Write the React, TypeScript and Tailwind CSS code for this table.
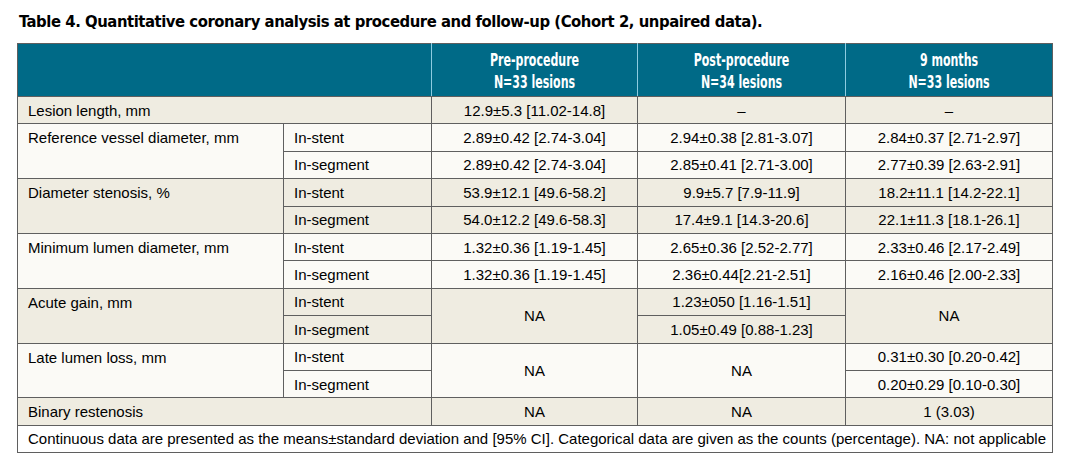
import React from 'react';

type Sub = { label: string; values: (string | null)[] };
type Group = { name: string; shaded: boolean; subs?: Sub[]; values?: string[]; merged?: (string | null)[] };

const condensed = { fontFamily: '"DejaVu Sans Condensed", "DejaVu Sans", sans-serif' };

const groups: Group[] = [
  { name: 'Lesion length, mm', shaded: true, values: ['12.9±5.3 [11.02-14.8]', '–', '–'] },
  {
    name: 'Reference vessel diameter, mm',
    shaded: false,
    subs: [
      { label: 'In-stent', values: ['2.89±0.42 [2.74-3.04]', '2.94±0.38 [2.81-3.07]', '2.84±0.37 [2.71-2.97]'] },
      { label: 'In-segment', values: ['2.89±0.42 [2.74-3.04]', '2.85±0.41 [2.71-3.00]', '2.77±0.39 [2.63-2.91]'] },
    ],
  },
  {
    name: 'Diameter stenosis, %',
    shaded: true,
    subs: [
      { label: 'In-stent', values: ['53.9±12.1 [49.6-58.2]', '9.9±5.7 [7.9-11.9]', '18.2±11.1 [14.2-22.1]'] },
      { label: 'In-segment', values: ['54.0±12.2 [49.6-58.3]', '17.4±9.1 [14.3-20.6]', '22.1±11.3 [18.1-26.1]'] },
    ],
  },
  {
    name: 'Minimum lumen diameter, mm',
    shaded: false,
    subs: [
      { label: 'In-stent', values: ['1.32±0.36 [1.19-1.45]', '2.65±0.36 [2.52-2.77]', '2.33±0.46 [2.17-2.49]'] },
      { label: 'In-segment', values: ['1.32±0.36 [1.19-1.45]', '2.36±0.44[2.21-2.51]', '2.16±0.46 [2.00-2.33]'] },
    ],
  },
  {
    name: 'Acute gain, mm',
    shaded: true,
    merged: ['NA', null, 'NA'],
    subs: [
      { label: 'In-stent', values: [null, '1.23±050 [1.16-1.51]', null] },
      { label: 'In-segment', values: [null, '1.05±0.49 [0.88-1.23]', null] },
    ],
  },
  {
    name: 'Late lumen loss, mm',
    shaded: false,
    merged: ['NA', 'NA', null],
    subs: [
      { label: 'In-stent', values: [null, null, '0.31±0.30 [0.20-0.42]'] },
      { label: 'In-segment', values: [null, null, '0.20±0.29 [0.10-0.30]'] },
    ],
  },
  { name: 'Binary restenosis', shaded: true, values: ['NA', 'NA', '1 (3.03)'] },
];

const cell = 'border border-[#5f5f5f] h-[27.4px] p-0 leading-none align-middle whitespace-nowrap';
const sub = 'border-t-[#a7a7a7]';

export default function App() {
  return (
    <div className="bg-white w-[1069px] h-[471px] text-black" style={{ fontFamily: '"Liberation Sans", Arial, sans-serif' }}>
      <div className="pt-[11px] pl-[19px] text-[16.5px] font-bold leading-[22px] tracking-[-0.45px]" style={condensed}>
        Table 4. Quantitative coronary analysis at procedure and follow-up (Cohort 2, unpaired data).
      </div>
      <table className="ml-[17px] mt-[10px] border-collapse table-fixed text-[15px] w-[1035px]">
        <colgroup>
          <col className="w-[266px]" />
          <col className="w-[148px]" />
          <col className="w-[206px]" />
          <col className="w-[208px]" />
          <col className="w-[207px]" />
        </colgroup>
        <thead>
          <tr className="bg-[#006a87] text-white h-[53px]">
            <th colSpan={2} className="border border-[#5f5f5f] border-r-[#8ecbe0]" />
            {[
              ['Pre-procedure', 'N=33 lesions'],
              ['Post-procedure', 'N=34 lesions'],
              ['9 months', 'N=33 lesions'],
            ].map(([a, b], i) => (
              <th
                key={a}
                className={`border border-[#5f5f5f] border-l-[#8ecbe0] ${i < 2 ? 'border-r-[#8ecbe0]' : ''} text-[17.5px] font-bold leading-[22px] text-center pt-[1px]`}
                style={condensed}
              >
                <div className="scale-x-[0.7] whitespace-nowrap">
                  <div>{a}</div>
                  <div>{b}</div>
                </div>
              </th>
            ))}
          </tr>
        </thead>
        <tbody>
          {groups.map((g) => {
            const bg = g.shaded ? 'bg-[#efece1]' : 'bg-[#fbfaf6]';
            if (!g.subs) {
              return (
                <tr key={g.name} className={bg}>
                  <td colSpan={2} className={`${cell} pl-[10px]`}>{g.name}</td>
                  {g.values!.map((v, i) => (
                    <td key={i} className={`${cell} text-center`}>{v}</td>
                  ))}
                </tr>
              );
            }
            return g.subs.map((s, si) => (
              <tr key={g.name + s.label} className={bg}>
                {si === 0 && (
                  <td rowSpan={2} className={`${cell} pl-[10px] align-top pt-[6px]`}>{g.name}</td>
                )}
                <td className={`${cell} pl-[10px] ${si === 1 ? sub : ''}`}>{s.label}</td>
                {s.values.map((v, i) => {
                  if (g.merged && g.merged[i] !== null) {
                    return si === 0 ? (
                      <td key={i} rowSpan={2} className={`${cell} text-center`}>{g.merged[i]}</td>
                    ) : null;
                  }
                  return (
                    <td key={i} className={`${cell} text-center ${si === 1 ? sub : ''}`}>{v}</td>
                  );
                })}
              </tr>
            ));
          })}
          <tr className="bg-white">
            <td colSpan={5} className={`${cell} pl-[10px]`}>
              Continuous data are presented as the means±standard deviation and [95% CI]. Categorical data are given as the counts (percentage). NA: not applicable
            </td>
          </tr>
        </tbody>
      </table>
    </div>
  );
}
